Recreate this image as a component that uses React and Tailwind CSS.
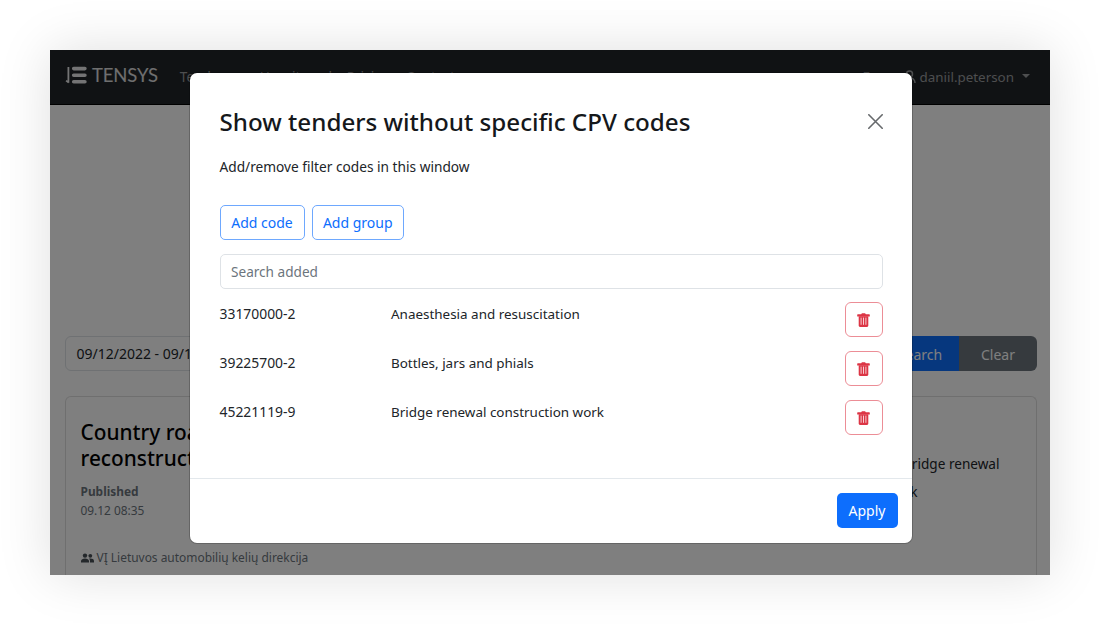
import React from "react";

const codes = [
  ["33170000-2", "Anaesthesia and resuscitation"],
  ["39225700-2", "Bottles, jars and phials"],
  ["45221119-9", "Bridge renewal construction work"],
];

function Logo() {
  return (
    <svg width="22" height="18" viewBox="0 0 22 18" fill="none" stroke="#fff" strokeOpacity=".9" className="-mt-[4px] shrink-0">
      <path d="M3.400 1v15.800M3.700 16.600L1.100 14.600" strokeWidth="1.8" />
      <path d="M8.700 2.600h11.200M8.700 9.200h11.200M8.700 15.800h11.200" strokeWidth="3.6" strokeLinecap="round" />
    </svg>
  );
}

function Trash() {
  return (
    <svg width="13" height="14" viewBox="0 0 13 14" className="-ml-px">
      <path fill="#dc3545" d="M.8 1.3h3.4l.7-1h3.2l.7 1h3.4c.4 0 .6.2.6.6v1.7H.2V1.900c0-.4.2-.6.6-.6z" />
      <path fill="#dc3545" d="M1.700 3.2h9.600v9.300c0 .9-.5 1.400-1.300 1.400H3c-.8 0-1.300-.5-1.300-1.400z" />
      <path stroke="#fff" strokeOpacity=".85" strokeWidth=".9" d="M4.1 4.600v7.200M6.5 4.600v7.200M8.900 4.600v7.200" />
    </svg>
  );
}

function Navbar() {
  return (
    <header className="flex h-[55px] shrink-0 items-center border-b border-black bg-[#212529] pl-[15px] pr-5 text-[#9a9c9f]">
      <Logo />
      <span className="-mt-[3px] ml-[5px] font-['Lato'] text-[18.5px] tracking-[-0.15px] text-white/85">TENSYS</span>
      <nav className="ml-[22px] flex text-[13.6px]">
        <span className="w-[80px]">Tenders</span>
        <span className="w-[87px]">How it works</span>
        <span className="w-[59px]">Pricing</span>
        <span>Contact</span>
      </nav>
      <span className="ml-auto text-[13.6px]">En</span>
      <svg width="13" height="14" viewBox="0 0 13 14" fill="none" stroke="currentColor" strokeWidth="1.5" className="ml-[24px]">
        <circle cx="6.5" cy="4" r="3" />
        <path d="M1 13c0-7 11-7 11 0" />
      </svg>
      <span className="ml-1 text-[13.4px]">daniil.peterson</span>
      <span className="ml-2 mt-[-3px] h-0 w-0 border-x-4 border-t-[4px] border-x-transparent border-t-current" />
    </header>
  );
}

function Background() {
  return (
    <div className="flex h-full flex-col bg-white">
      <Navbar />
      <main className="flex flex-1 flex-col px-[15px] pr-[13px] pt-[231px]">
        <div className="flex h-[35px] shrink-0 text-[14px]">
          <div className="flex flex-1 items-center rounded-l-[6px] border border-[#dee2e6] pl-[10.500px] text-[#212529]">09/12/2022 - 09/12/2022</div>
          <div className="flex w-[81px] items-center justify-center bg-[#0d6efd] pl-[3px] pt-px text-white">Search</div>
          <div className="flex w-[78px] items-center justify-center rounded-r-[6px] bg-[#6c757d] pt-px text-white">Clear</div>
        </div>
        <section className="mt-[25px] flex flex-1 justify-between rounded-t-[6px] border border-b-0 border-[#dfdfdf] pl-[14.5px] pr-[36px]">
          <div>
            <h2 className="mt-[22px] text-[20.8px] font-medium leading-[26px] text-black">Country road<br />reconstruction</h2>
            <div className="mt-[11px] text-[11.9px] font-bold leading-[19px] text-[#6c757d]">Published</div>
            <div className="text-[11.9px] leading-[19px] text-[#6c757d]">09.12 08:35</div>
            <div className="mt-[28px] flex items-center text-[11.95px] leading-[19px] text-[#6c757d]">
              <svg width="13" height="10" viewBox="0 0 13 10" fill="#495057" className="mr-[3px]">
                <circle cx="4" cy="2.6" r="2.2" />
                <circle cx="9.3" cy="2.8" r="1.9" />
                <path d="M0 9.6V8c0-3.400 8-3.400 8 0v1.600zM9 9.600V7.800c0-1-.4-1.600-1-2.100 2.200-.6 5 .2 5 2.200v1.700z" />
              </svg>
              VĮ Lietuvos automobilių kelių direkcija
            </div>
          </div>
          <div className="w-[97px] pt-[53px] text-[13.6px] leading-[28px] text-[#212529]">
            <div className="whitespace-nowrap">Bridge renewal</div>
            <div className="-ml-[101px] whitespace-nowrap">construction work</div>
          </div>
        </section>
      </main>
    </div>
  );
}

function Modal() {
  return (
    <div className="flex h-[470px] w-[722px] flex-col rounded-[7px] bg-white pl-[29.5px] pr-[29px] text-[#212529] shadow-[0_0_0_1px_rgba(0,0,0,0.2)]">
      <div className="flex items-start justify-between pt-[33px]">
        <h1 className="text-[24.2px] font-medium leading-[32px] text-[#15181b]">Show tenders without specific CPV codes</h1>
        <svg width="15" height="15" viewBox="0 0 15 15" fill="none" stroke="#66696c" strokeWidth="1.6" strokeLinecap="round" className="mt-[7.500px]">
          <path d="M.8.8l13.400 13.400M14.200.8L.8 14.200" />
        </svg>
      </div>
      <p className="mt-[18px] text-[13.7px] leading-[22px]">Add/remove filter codes in this window</p>
      <div className="mt-[27px] flex gap-[7px] text-[14px] text-[#0d6efd]">
        <button className="h-[35px] w-[85px] rounded-[5px] border border-[#6ea8fe]">Add code</button>
        <button className="h-[35px] w-[92.500px] rounded-[5px] border border-[#6ea8fe]">Add group</button>
      </div>
      <div className="mt-[14px] flex h-[35px] shrink-0 items-center rounded-[5px] border border-[#dee2e6] pl-[10.500px] pt-[2px] text-[13.6px] text-[#6c757d]">Search added</div>
      <div className="mt-[13px] flex flex-col gap-[14px]">
        {codes.map(([code, name]) => (
          <div key={code} className="flex h-[35px]">
            <span className="w-[171.500px] pt-px text-[13.9px] leading-[22px]">{code}</span>
            <span className="flex-1 pt-px text-[13.45px] leading-[22px]">{name}</span>
            <button className="flex w-[38px] items-center justify-center rounded-[6px] border border-[#ec8d96]"><Trash /></button>
          </div>
        ))}
      </div>
      <div className="-ml-[29.500px] -mr-[29px] mt-auto flex h-[65px] shrink-0 items-center justify-end border-t border-[#e3e8ec] pb-[2px] pr-[14.500px]">
        <button className="h-[35px] w-[61px] rounded-[5px] bg-[#0d6efd] pt-px text-[14px] text-white">Apply</button>
      </div>
    </div>
  );
}

export default function App() {
  return (
    <div className="flex h-[625px] w-[1100px] items-center justify-center bg-white font-['Noto_Sans','Open_Sans',sans-serif]">
      <div className="relative h-[525px] w-[1000px] shadow-[0_0_50px_rgba(0,0,0,0.13)]">
        <div className="h-full overflow-hidden"><Background /></div>
        <div className="absolute inset-0 flex items-start bg-black/50 pl-[140px] pt-[23px]"><Modal /></div>
      </div>
    </div>
  );
}
